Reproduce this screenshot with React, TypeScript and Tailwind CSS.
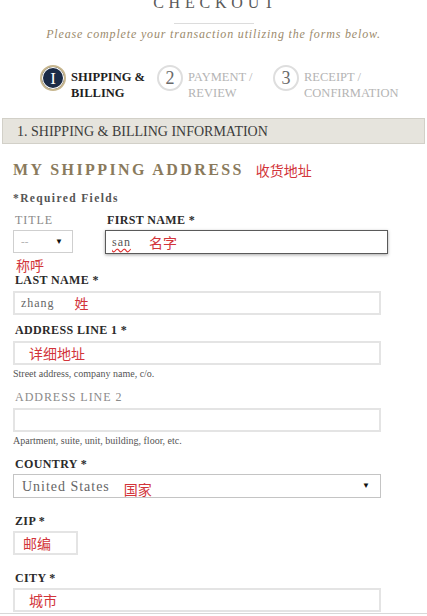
import type { ReactNode } from 'react';

const CN = "font-['Noto_Sans_CJK_SC',sans-serif] text-[#d2343a]";

// Red annotation added on top of the form screenshot
function Note({ children, className = '' }: { children: ReactNode; className?: string }) {
  return <span className={`${CN} text-[14px] leading-none ${className}`}>{children}</span>;
}

function Label({ children, muted = false, className = '' }: { children: ReactNode; muted?: boolean; className?: string }) {
  return (
    <div
      className={
        muted
          ? `text-[12px] leading-[14px] tracking-[0.08em] text-[#8a8a8a] ${className}`
          : `text-[12px] leading-[14px] font-bold tracking-[0.03em] text-[#2a2a2a] ${className}`
      }
    >
      {children}
    </div>
  );
}

function Field({ children, className = '' }: { children?: ReactNode; className?: string }) {
  return (
    <div className={`h-[24px] border-2 border-[#e4e4e4] bg-white flex items-center ${className}`}>
      {children}
    </div>
  );
}

function Step({ n, active, top, bottom, className = '' }: { n: string; active?: boolean; top: string; bottom: string; className?: string }) {
  return (
    <div className={`flex items-start gap-[5px] ${className}`}>
      {active ? (
        <div className="w-[26px] h-[26px] rounded-full bg-[#1b2b47] border-2 border-[#c7b68e] shadow-[inset_0_0_0_1px_#ffffff] flex items-center justify-center text-white text-[17px] leading-none">
          {n}
        </div>
      ) : (
        <div className="w-[26px] h-[26px] rounded-full border-2 border-[#dedede] bg-white flex items-center justify-center text-[#6a6a6a] text-[18px] leading-none">
          {n}
        </div>
      )}
      <div
        className={
          active
            ? 'pt-[4px] text-[12.5px] leading-[16px] font-bold text-[#1e1e1e]'
            : 'pt-[4px] text-[12.5px] leading-[16px] text-[#b4b4b4]'
        }
      >
        <div>{top}</div>
        <div>{bottom}</div>
      </div>
    </div>
  );
}

export default function App() {
  return (
    <div className="w-[427px] h-[616px] overflow-hidden bg-white font-['Liberation_Serif',serif]">
      {/* header */}
      <div className="flex flex-col items-center">
        <h1 className="-mt-[7px] text-[16px] leading-[20px] tracking-[0.3em] text-[#5a5a5a] pl-[0.3em]">CHECKOUT</h1>
        <div className="mt-[10px] w-[80px] h-px bg-[#dcdcdc]" />
        <p className="mt-[2px] text-[12px] leading-[16px] italic tracking-[0.07em] text-[#9b8a6c]">
          Please complete your transaction utilizing the forms below.
        </p>
      </div>

      {/* steps */}
      <div className="mt-[23px] flex pl-[40px]">
        <Step n="I" active top="SHIPPING &" bottom="BILLING" className="w-[117px]" />
        <Step n="2" top="PAYMENT /" bottom="REVIEW" className="w-[116px]" />
        <Step n="3" top="RECEIPT /" bottom="CONFIRMATION" />
      </div>

      {/* section bar */}
      <div className="mt-[17px] mx-[2px] h-[26px] bg-[#e6e4dd] border border-[#d2d0c8] flex items-center pl-[14px] text-[14px] text-[#3c3c3c]">
        1. SHIPPING &amp; BILLING INFORMATION
      </div>

      <div className="px-[13px]">
        <div className="mt-[16px] flex items-center h-[20px]">
          <h2 className="text-[16px] font-bold tracking-[0.15em] text-[#8a7a5c]">MY SHIPPING ADDRESS</h2>
          <Note className="ml-[12px]">收货地址</Note>
        </div>

        <div className="mt-[11px] text-[11.5px] leading-[14px] font-bold tracking-[0.12em] text-[#555]">*Required Fields</div>

        {/* title + first name */}
        <div className="mt-[8px] flex gap-[32px]">
          <div className="w-[60px]">
            <Label muted className="pl-[2px]">TITLE</Label>
            <div className="mt-[3px] h-[23px] border border-[#cfcfcf] flex items-center justify-between pl-[7px] pr-[9px]">
              <span className="text-[11px] text-[#aaa]">--</span>
              <span className="text-[8px] text-[#111]">▼</span>
            </div>
            <div className="mt-[5px] h-[13px] pl-[3px] flex items-center">
              <Note className="text-[13px]">称呼</Note>
            </div>
          </div>
          <div className="w-[283px]">
            <Label className="pl-[2px]">FIRST NAME *</Label>
            <div className="mt-[3px] h-[24px] border border-[#5a5a5a] shadow-[0_1px_3px_rgba(0,0,0,0.35)] flex items-center pl-[6px]">
              <span className="text-[12px] tracking-[0.08em] text-[#555] underline decoration-wavy decoration-[#e03030] underline-offset-2">san</span>
              <Note className="ml-[18px]">名字</Note>
            </div>
          </div>
        </div>

        <Label className="mt-[2px] pl-[2px] leading-[12px]">LAST NAME *</Label>
        <Field className="mt-[4px] w-[368px] pl-[6px]">
          <span className="text-[12px] tracking-[0.08em] text-[#666]">zhang</span>
          <Note className="ml-[20px]">姓</Note>
        </Field>

        <Label className="mt-[8px] pl-[2px]">ADDRESS LINE 1 *</Label>
        <Field className="mt-[4px] w-[368px] pl-[14px]">
          <Note>详细地址</Note>
        </Field>
        <div className="mt-[3px] text-[10px] leading-[12px] text-[#555]">Street address, company name, c/o.</div>

        <Label muted className="mt-[10px] pl-[2px]">ADDRESS LINE 2</Label>
        <Field className="mt-[4px] w-[368px]" />
        <div className="mt-[3px] text-[10px] leading-[12px] text-[#555]">Apartment, suite, unit, building, floor, etc.</div>

        <Label className="mt-[10px] pl-[2px]">COUNTRY *</Label>
        <div className="mt-[3px] h-[24px] w-[368px] border border-[#c4c4c4] flex items-center pl-[8px] pr-[10px]">
          <span className="text-[14px] tracking-[0.07em] text-[#666]">United States</span>
          <Note className="ml-[14px] mt-[6px]">国家</Note>
          <span className="ml-auto text-[8px] text-[#111]">▼</span>
        </div>

        <Label className="mt-[16px] pl-[2px]">ZIP *</Label>
        <Field className="mt-[3px] w-[65px] pl-[8px]">
          <Note>邮编</Note>
        </Field>

        <Label className="mt-[16px] pl-[2px]">CITY *</Label>
        <Field className="mt-[3px] w-[368px] pl-[14px]">
          <Note>城市</Note>
        </Field>
      </div>
      <div className="mt-[1px] h-px bg-[#d8d8d8]" />
    </div>
  );
}
